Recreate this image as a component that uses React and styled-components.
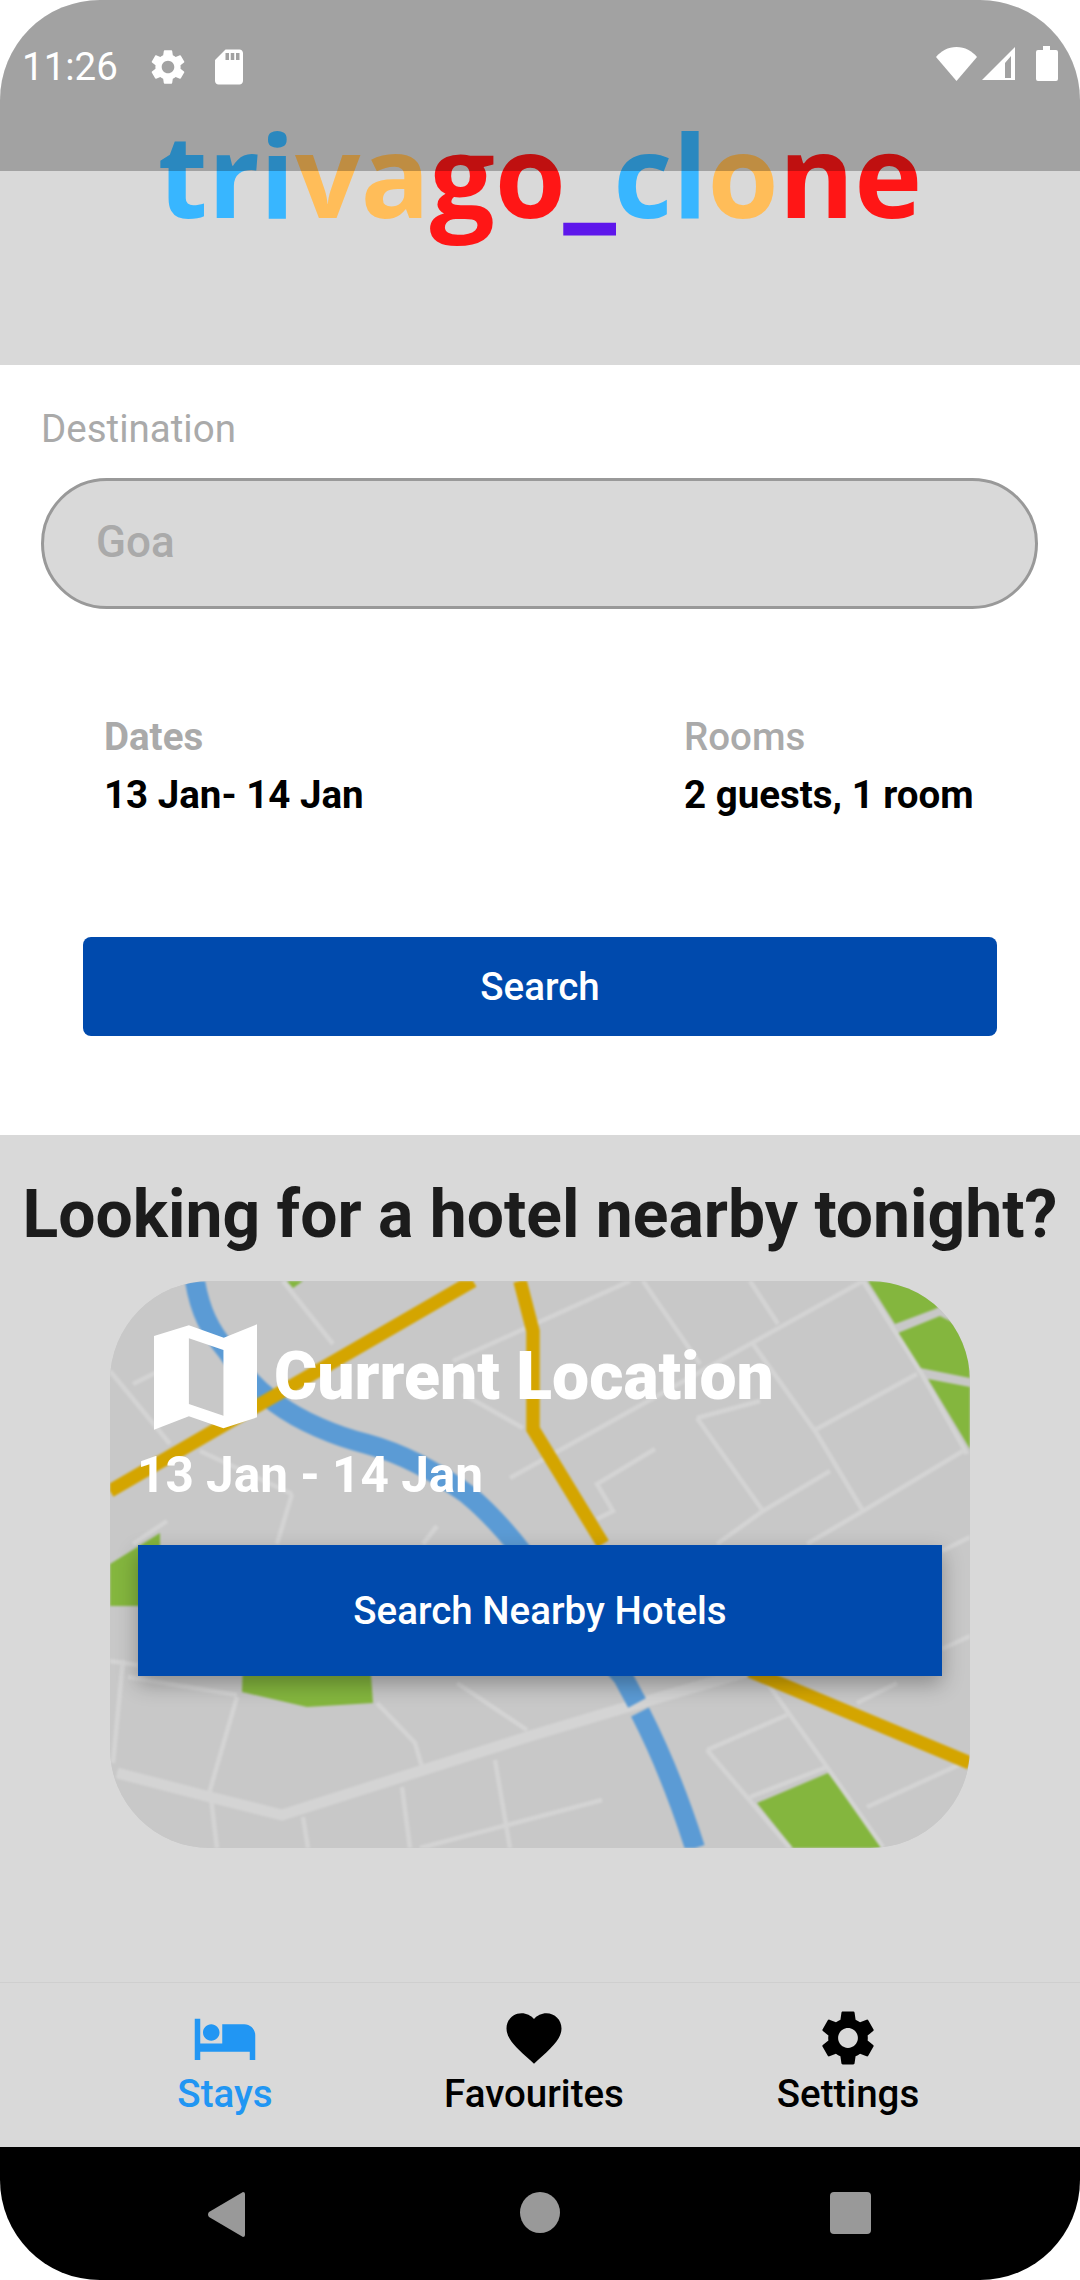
import React from 'react';
import styled, { createGlobalStyle } from 'styled-components';
import { MdHotel, MdFavorite, MdSettings, MdSdStorage } from 'react-icons/md';

const GlobalStyle = createGlobalStyle`
  html, body {
    margin: 0;
    padding: 0;
    background: #fff;
  }
  * {
    box-sizing: border-box;
  }
`;

const Screen = styled.div`
  position: relative;
  width: 1080px;
  height: 2280px;
  border-radius: 100px;
  overflow: hidden;
  display: flex;
  flex-direction: column;
  background: #fff;
  font-family: Roboto, "Liberation Sans", sans-serif;
`;

// translucent system bar, it lies over the logo
const StatusBar = styled.div`
  position: absolute;
  top: 0;
  left: 0;
  right: 0;
  height: 171px;
  padding: 46px 22px 0 22px;
  background: rgba(0, 0, 0, 0.25);
  display: flex;
  justify-content: space-between;
  align-items: flex-start;
  color: #fff;
`;

const StatusGroup = styled.div`
  display: flex;
  align-items: center;
  gap: ${(p) => p.gap}px;
`;

const Clock = styled.span`
  font-size: 38.5px;
  line-height: 42px;
  margin-right: 10px;
`;

const SignalSlot = styled.div`
  display: flex;
  margin: 0 20px 0 5px;
`;

const Header = styled.header`
  height: 365px;
  background: #d9d9d9;
  padding-top: 96px;
  display: flex;
  justify-content: center;
`;

const Logo = styled.div`
  font-family: "Open Sans", sans-serif;
  font-weight: 700;
  font-size: 115px;
  line-height: 150px;
`;

const LogoPart = styled.span`
  color: ${(p) => p.color};
`;

// the underscore of the logo is much heavier than the font's own
const LogoDash = styled.span`
  color: #5e17eb;
  -webkit-text-stroke: 5px #5e17eb;
  vertical-align: 3px;
`;

const SearchForm = styled.section`
  height: 770px;
  padding: 41px 42px 0 41px;
  display: flex;
  flex-direction: column;
`;

const FieldLabel = styled.label`
  font-size: 38.5px;
  line-height: 45px;
  color: #aaa;
`;

const DestinationInput = styled.div`
  margin-top: 27px;
  height: 131px;
  border: 3px solid #999;
  border-radius: 66px;
  background: #d9d9d9;
  padding: 0 0 4px 52px;
  display: flex;
  align-items: center;
  font-size: 44px;
  font-weight: 500;
  color: #aaa;
`;

const InfoRow = styled.div`
  margin-top: 105px;
  padding-left: 63px;
  display: flex;
`;

const InfoBlock = styled.div`
  width: ${(p) => p.width}px;
  display: flex;
  flex-direction: column;
  gap: 13px;
`;

const InfoLabel = styled.span`
  font-size: 38.5px;
  line-height: 45px;
  font-weight: ${(p) => p.weight};
  color: #aaa;
`;

const InfoValue = styled.span`
  font-size: 38.5px;
  line-height: 45px;
  font-weight: 700;
  color: #000;
`;

const SearchButton = styled.button`
  margin: 120px 41px 0 42px;
  height: 99px;
  border: 0;
  border-radius: 8px;
  background: #004aad;
  color: #fff;
  font: 500 38.5px Roboto, sans-serif;
`;

const Nearby = styled.section`
  flex: 1;
  background: #d9d9d9;
  display: flex;
  flex-direction: column;
  align-items: center;
`;

const NearbyTitle = styled.h2`
  margin: 41px 0 0;
  font-size: 66px;
  line-height: 78px;
  font-weight: 700;
  color: #1c1c1c;
  white-space: nowrap;
`;

const MapCard = styled.div`
  position: relative;
  margin-top: 27px;
  width: 860px;
  height: 567px;
  border-radius: 100px;
  overflow: hidden;
  background: #c8c8c8;
  padding: 43px 28px 0;
  color: #fff;
`;

const MapBackdrop = styled.svg`
  position: absolute;
  inset: 0;
  width: 100%;
  height: 100%;
  filter: blur(0.9px);
`;

const CardContent = styled.div`
  position: relative;
  display: flex;
  flex-direction: column;
`;

const CardHead = styled.div`
  display: flex;
  align-items: center;
  gap: 17px;
  padding-left: 16px;
`;

const CardTitle = styled.span`
  font-size: 66px;
  line-height: 78px;
  font-weight: 900;
`;

const CardDates = styled.span`
  margin: 16px 0 0 -1px;
  font-size: 49.5px;
  line-height: 58px;
  font-weight: 700;
`;

const NearbyButton = styled.button`
  margin-top: 41px;
  height: 131px;
  width: 804px;
  border: 0;
  background: #004aad;
  color: #fff;
  font: 500 38.5px Roboto, sans-serif;
  box-shadow: 0 8px 20px rgba(0, 0, 0, 0.3);
`;

const TabBar = styled.nav`
  height: 165px;
  background: #d9d9d9;
  border-top: 1px solid #cfcfcf;
  padding-left: 75px;
  display: grid;
  grid-template-columns: 300px 318px 310px;
`;

const Tab = styled.div`
  display: flex;
  flex-direction: column;
  align-items: center;
  padding-top: 22px;
  color: ${(p) => (p.active ? '#2196f3' : '#000')};
`;

const TabIcon = styled.div`
  height: 66px;
  display: flex;
  font-size: 66px;
`;

const TabLabel = styled.span`
  font-size: 38.5px;
  line-height: 45px;
  font-weight: 500;
`;

const NavBar = styled.div`
  height: 133px;
  background: #000;
  display: flex;
  align-items: flex-start;
  padding: 45px 0 0 207px;
`;

const NavIcon = styled.svg`
  display: block;
  fill: #999;
  margin-left: ${(p) => p.$space || 0}px;
`;

const streets = [
  // top half, right of the orange road
  [[520, 0], [343, 80]],
  [[533, 0], [590, 83]],
  [[640, 0], [668, 43]],
  [[753, 0], [400, 197]],
  [[753, 0], [810, 90], [857, 173]],
  [[643, 63], [707, 153], [753, 230]],
  [[807, 93], [703, 150]],
  [[587, 137], [650, 120]],
  [[587, 137], [653, 230]],
  [[720, 190], [653, 230], [607, 263]],
  [[853, 170], [753, 230], [697, 263]],
  [[545, 168], [487, 203], [503, 230], [487, 238]],
  [[353, 113], [413, 147]],
  // top half, left
  [[173, 0], [223, 63]],
  [[0, 90], [60, 163]],
  [[23, 103], [53, 88]],
  [[182, 213], [167, 263]],
  [[90, 170], [182, 213]],
  [[327, 245], [313, 263]],
  [[57, 240], [23, 263]],
  // beside the button
  [[860, 256], [832, 270]],
  [[860, 355], [832, 368]],
  [[0, 380], [28, 384]],
  // bottom half
  [[13, 379], [3, 482]],
  [[127, 416], [100, 509], [107, 567]],
  [[18, 396], [127, 414]],
  [[267, 422], [305, 462], [312, 486]],
  [[347, 402], [417, 449]],
  [[292, 506], [300, 567]],
  [[193, 536], [198, 567]],
  [[385, 479], [400, 567]],
  [[492, 519], [310, 567]],
  [[653, 396], [717, 486], [773, 566]],
  [[597, 469], [677, 434]],
  [[597, 469], [680, 567]],
  [[640, 516], [717, 486]],
  [[757, 526], [853, 482]],
  [[747, 422], [787, 402]],
];

const parks = [
  '177,0 193,0 183,7',
  '758,0 860,0 860,10 825,28 785,43',
  '788,52 830,35 860,50 860,97 810,87',
  '818,98 860,106 860,168',
  '0,283 50,252 50,325 0,325',
  '133,380 132,411 197,426 263,422 260,380',
  '647,522 718,492 773,564 770,567 683,567',
];

const toPoints = (line) => line.map((pt) => pt.join(',')).join(' ');

const MapDrawing = () => (
  <MapBackdrop viewBox="0 0 860 567">
    <rect width="860" height="567" fill="#c8c8c8" />
    <g fill="#84b63e">
      {parks.map((points) => (
        <polygon key={points} points={points} />
      ))}
    </g>
    <g fill="none" stroke="#d4d4d4" strokeWidth="4.5">
      {streets.map((line, index) => (
        <polyline key={index} points={toPoints(line)} />
      ))}
      <polyline points="7,492 100,516 172,534 420,455 517,426 640,390" strokeWidth="11" />
    </g>
    <g fill="none" stroke="#5b9bd5" strokeWidth="20">
      <path d="M85 0 C 90 30 100 50 117 70 C 130 90 145 108 167 123 C 190 140 225 155 257 163 C 290 172 325 190 357 213 C 390 240 420 280 440 310 L 513 396 L 527 422" />
      <path d="M530 431 C 550 470 570 520 585 567" />
    </g>
    <g fill="none" stroke="#d4a500" strokeWidth="13.5">
      <polyline points="363,0 0,210" />
      <polyline points="410,0 423,50 423,148 493,263" />
      <polyline points="640,390 860,482" />
    </g>
  </MapBackdrop>
);

const MapIcon = () => (
  <svg width="103" height="106" viewBox="163 130 310 317">
    <path
      fill="#fff"
      fillRule="evenodd"
      d="M163 165 L268 133 L373 170 L473 130 V410 L372 443 L268 407 L163 447 Z M268 172 V370 L372 405 V207 Z"
    />
  </svg>
);

const WifiIcon = () => (
  <svg width="41" height="34" viewBox="0 0 41 34">
    <path fill="#fff" d="M20.5 34 L0 10 C 5 4 12 0 20.5 0 C 29 0 36 4 41 10 Z" />
  </svg>
);

const SignalIcon = () => (
  <svg width="34" height="34" viewBox="0 0 34 34">
    <path fill="#fff" fillRule="evenodd" d="M0 33 L33 0 V33 Z M23 16 V31 H29 V9 Z" />
  </svg>
);

const BatteryIcon = () => (
  <svg width="22" height="35" viewBox="0 0 22 35">
    <path fill="#fff" d="M7 0 H14 V4 H20 Q22 4 22 6 V33 Q22 35 20 35 H2 Q0 35 0 33 V6 Q0 4 2 4 H7 Z" />
  </svg>
);

export default function App() {
  return (
    <>
      <GlobalStyle />
      <Screen>
        <Header>
          <Logo>
            <LogoPart color="#38b6ff">tri</LogoPart>
            <LogoPart color="#ffbd59">va</LogoPart>
            <LogoPart color="#ff1616">go</LogoPart>
            <LogoDash>_</LogoDash>
            <LogoPart color="#38b6ff">cl</LogoPart>
            <LogoPart color="#ffbd59">o</LogoPart>
            <LogoPart color="#ff1616">ne</LogoPart>
          </Logo>
        </Header>

        <SearchForm>
          <FieldLabel>Destination</FieldLabel>
          <DestinationInput>Goa</DestinationInput>
          <InfoRow>
            <InfoBlock width={580}>
              <InfoLabel weight={700}>Dates</InfoLabel>
              <InfoValue>13 Jan- 14 Jan</InfoValue>
            </InfoBlock>
            <InfoBlock width={330}>
              <InfoLabel weight={500}>Rooms</InfoLabel>
              <InfoValue>2 guests, 1 room</InfoValue>
            </InfoBlock>
          </InfoRow>
          <SearchButton>Search</SearchButton>
        </SearchForm>

        <Nearby>
          <NearbyTitle>Looking for a hotel nearby tonight?</NearbyTitle>
          <MapCard>
            <MapDrawing />
            <CardContent>
              <CardHead>
                <MapIcon />
                <CardTitle>Current Location</CardTitle>
              </CardHead>
              <CardDates>13 Jan - 14 Jan</CardDates>
              <NearbyButton>Search Nearby Hotels</NearbyButton>
            </CardContent>
          </MapCard>
        </Nearby>

        <TabBar>
          <Tab active>
            <TabIcon><MdHotel /></TabIcon>
            <TabLabel>Stays</TabLabel>
          </Tab>
          <Tab>
            <TabIcon><MdFavorite /></TabIcon>
            <TabLabel>Favourites</TabLabel>
          </Tab>
          <Tab>
            <TabIcon><MdSettings /></TabIcon>
            <TabLabel>Settings</TabLabel>
          </Tab>
        </TabBar>

        <NavBar>
          <NavIcon width="38" height="45" viewBox="0 0 38 45">
            <path d="M36 0 Q38 0 38 2 V43 Q38 45 36 45 L2 25 Q0 22.5 2 20 Z" />
          </NavIcon>
          <NavIcon $space={275} width="40" height="41" viewBox="0 0 40 41">
            <ellipse cx="20" cy="20.5" rx="20" ry="20.5" />
          </NavIcon>
          <NavIcon $space={270} width="41" height="42" viewBox="0 0 41 42">
            <rect width="41" height="42" rx="4" />
          </NavIcon>
        </NavBar>

        <StatusBar>
          <StatusGroup gap={19}>
            <Clock>11:26</Clock>
            <MdSettings size={42} />
            <MdSdStorage size={42} />
          </StatusGroup>
          <StatusGroup gap={0}>
            <WifiIcon />
            <SignalSlot><SignalIcon /></SignalSlot>
            <BatteryIcon />
          </StatusGroup>
        </StatusBar>
      </Screen>
    </>
  );
}
